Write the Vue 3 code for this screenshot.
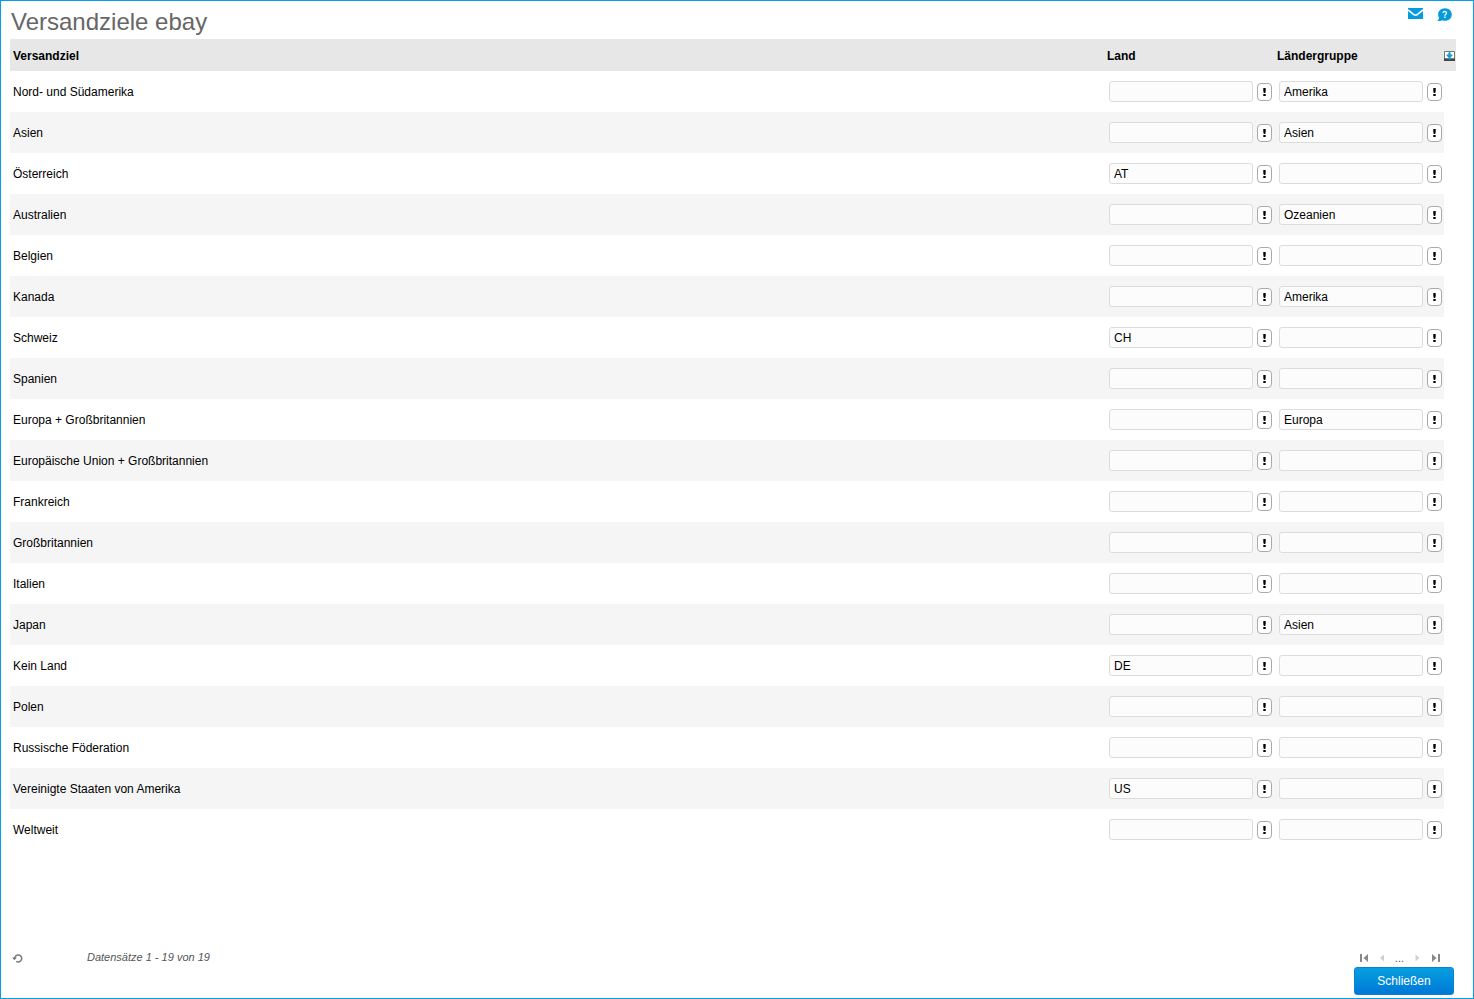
<script setup>
import { ref } from 'vue'

const rows = ref([
  { name: 'Nord- und Südamerika', country: '', group: 'Amerika' },
  { name: 'Asien', country: '', group: 'Asien' },
  { name: 'Österreich', country: 'AT', group: '' },
  { name: 'Australien', country: '', group: 'Ozeanien' },
  { name: 'Belgien', country: '', group: '' },
  { name: 'Kanada', country: '', group: 'Amerika' },
  { name: 'Schweiz', country: 'CH', group: '' },
  { name: 'Spanien', country: '', group: '' },
  { name: 'Europa + Großbritannien', country: '', group: 'Europa' },
  { name: 'Europäische Union + Großbritannien', country: '', group: '' },
  { name: 'Frankreich', country: '', group: '' },
  { name: 'Großbritannien', country: '', group: '' },
  { name: 'Italien', country: '', group: '' },
  { name: 'Japan', country: '', group: 'Asien' },
  { name: 'Kein Land', country: 'DE', group: '' },
  { name: 'Polen', country: '', group: '' },
  { name: 'Russische Föderation', country: '', group: '' },
  { name: 'Vereinigte Staaten von Amerika', country: 'US', group: '' },
  { name: 'Weltweit', country: '', group: '' },
])
</script>

<template>
  <div class="window">
    <header class="titlebar">
      <h1>Versandziele ebay</h1>
      <div class="tools">
        <button type="button" class="icon-button" aria-label="Nachricht">
          <svg width="15" height="11" viewBox="0 0 15 11">
            <path d="M0 0H15V11H0Z" fill="#069bdc" />
            <path d="M0 2L5.500 6.300Q7.500 7.800 9.500 6.300L15 2" fill="none" stroke="#fff" stroke-width="1.600" />
          </svg>
        </button>
        <button type="button" class="icon-button" aria-label="Hilfe">
          <svg width="15" height="14" viewBox="0 0 15 14">
            <path d="M8 0.2C12 0.2 14.8 3 14.8 6.5S12 12.8 8 12.8C7 12.8 6 12.6 5.200 12.200C3.600 13 1.800 13.200 0.200 13C1.300 12.200 1.900 11.100 2 9.800C1.400 8.900 1.100 7.800 1.100 6.500C1.100 3 4 0.200 8 0.200Z" fill="#069bdc" />
            <path d="M6.100 4.900C6.100 2.900 9.500 2.900 9.500 4.900C9.500 6.200 7.900 6.100 7.900 7.700" fill="none" stroke="#fff" stroke-width="1.300" />
            <path d="M7.200 8.500H8.600V9.900H7.200Z" fill="#fff" />
          </svg>
        </button>
      </div>
    </header>

    <main>
      <table>
        <colgroup>
          <col />
          <col class="col-field" />
          <col class="col-field" />
          <col class="col-tool" />
        </colgroup>
        <thead>
          <tr>
            <th scope="col">Versandziel</th>
            <th scope="col">Land</th>
            <th scope="col">Ländergruppe</th>
            <th class="tool">
              <button type="button" class="icon-button" aria-label="Exportieren">
                <svg width="11" height="10" viewBox="0 0 11 10">
                  <path d="M0.500 0.500H10.500V8H0.500Z" fill="#fff" stroke="#777" />
                  <path d="M0 7.500H11V10H0Z" fill="#444" />
                  <path d="M5.500 0.500L7 2.500H6.500V3.500H8.500V4.500L6.500 6.500V8.500H4.500V6.500L2.500 4.500V3.500H4.500V2.500H4Z" fill="#139bd4" />
                </svg>
              </button>
            </th>
          </tr>
        </thead>
        <tbody>
          <tr v-for="row in rows" :key="row.name">
            <td>{{ row.name }}</td>
            <td>
              <div class="field">
                <input v-model="row.country" type="text" :aria-label="'Land: ' + row.name" />
                <button type="button" class="pick" :aria-label="'Land auswählen: ' + row.name">
                  <svg width="3" height="8" viewBox="0 0 3 8"><path d="M0.300 0H2.700V3L2.200 5H0.800L0.300 3ZM0.300 6H2.700V8H0.300Z" /></svg>
                </button>
              </div>
            </td>
            <td>
              <div class="field">
                <input v-model="row.group" type="text" :aria-label="'Ländergruppe: ' + row.name" />
                <button type="button" class="pick" :aria-label="'Ländergruppe auswählen: ' + row.name">
                  <svg width="3" height="8" viewBox="0 0 3 8"><path d="M0.300 0H2.700V3L2.200 5H0.800L0.300 3ZM0.300 6H2.700V8H0.300Z" /></svg>
                </button>
              </div>
            </td>
            <td class="tool"></td>
          </tr>
        </tbody>
      </table>
    </main>

    <footer>
      <div class="status">
        <button type="button" class="icon-button" aria-label="Aktualisieren">
          <svg width="11" height="10" viewBox="0 0 11 10">
            <path d="M2.700 5.500A3.500 3.500 0 1 1 4.200 8.300" fill="none" stroke="#777" stroke-width="1.500" />
            <path d="M0 4.500H4.800L2.400 7.200Z" fill="#777" />
          </svg>
        </button>
        <span class="count">Datensätze 1 - 19 von 19</span>
        <nav class="pager" aria-label="Seiten">
          <button type="button" class="icon-button" aria-label="Erste Seite">
            <svg width="9" height="8" viewBox="0 0 9 8"><path d="M1 0H3V8H1ZM9 0V8L4.500 4Z" fill="#888" /></svg>
          </button>
          <button type="button" class="icon-button" aria-label="Vorherige Seite">
            <svg width="5" height="8" viewBox="0 0 5 8"><path d="M5 0.500V7.500L1 4Z" fill="#d0d0d0" /></svg>
          </button>
          <span>...</span>
          <button type="button" class="icon-button" aria-label="Nächste Seite">
            <svg width="5" height="8" viewBox="0 0 5 8"><path d="M0.500 0.500V7.500L4.500 4Z" fill="#d0d0d0" /></svg>
          </button>
          <button type="button" class="icon-button" aria-label="Letzte Seite">
            <svg width="9" height="8" viewBox="0 0 9 8"><path d="M7 0H9V8H7ZM1 0V8L5.500 4Z" fill="#888" /></svg>
          </button>
        </nav>
      </div>
      <button type="button" class="close">Schließen</button>
    </footer>
  </div>
</template>

<style scoped>
.window {
  box-sizing: border-box;
  min-height: 100vh;
  display: flex;
  flex-direction: column;
  padding: 0 17px 3px 9px;
  border: 1px solid #069fe3;
  background: #fff;
  color: #000;
  font: 12px/16px "Liberation Sans", Arial, sans-serif;
}

button,
input {
  box-sizing: border-box;
  font: inherit;
}

.icon-button {
  display: block;
  padding: 0;
  border: 0;
  background: none;
  cursor: pointer;
}

svg {
  display: block;
}

.titlebar {
  display: flex;
  justify-content: space-between;
  height: 38px;
}

h1 {
  margin: 6px 0 0 1px;
  color: #666;
  font-size: 24px;
  font-weight: normal;
  line-height: 30px;
}

.tools {
  display: flex;
  align-items: flex-start;
  gap: 14px;
  padding: 7px 4px 0 0;
}

main {
  flex: 1;
}

table {
  width: 100%;
  table-layout: fixed;
  border-collapse: collapse;
}

.col-field {
  width: 170px;
}

.col-tool {
  width: 12px;
}

th {
  box-sizing: border-box;
  height: 32px;
  padding: 2px 3px 0;
  background: #e7e7e7;
  text-align: left;
}

td {
  height: 41px;
  padding: 0 3px;
}

tbody tr:nth-child(even) td:not(.tool) {
  background: #f5f5f5;
}

th.tool {
  padding: 2px 0 0;
}

td.tool {
  padding: 0;
}

.field {
  display: flex;
  align-items: center;
  gap: 4px;
  margin-left: 2px;
}

.field input {
  flex: none;
  width: 144px;
  height: 21px;
  padding: 0 4px;
  border: 1px solid #dcdcdc;
  border-radius: 3px;
  background: #fcfcfc;
  color: #000;
}

.pick {
  flex: none;
  display: flex;
  align-items: center;
  justify-content: center;
  width: 15px;
  height: 18px;
  padding: 0;
  border: 1px solid #aaa;
  border-radius: 4px;
  background: #fff;
}

footer {
  display: flex;
  flex-direction: column;
}

.status {
  display: flex;
  align-items: center;
  height: 18px;
  padding: 0 16px 0 2px;
  color: #555;
  font-size: 11px;
}

.count {
  margin-left: 64px;
  padding-bottom: 2px;
  font-style: italic;
}

.pager {
  display: flex;
  align-items: center;
  gap: 11px;
  margin-left: auto;
}

.close {
  align-self: flex-end;
  width: 100px;
  height: 28px;
  margin-right: 2px;
  border: 1px solid #0a82d0;
  border-radius: 3px;
  background: linear-gradient(#069fdf, #0078d7);
  color: #fff;
}
</style>

<style>
body {
  margin: 0;
}
</style>
